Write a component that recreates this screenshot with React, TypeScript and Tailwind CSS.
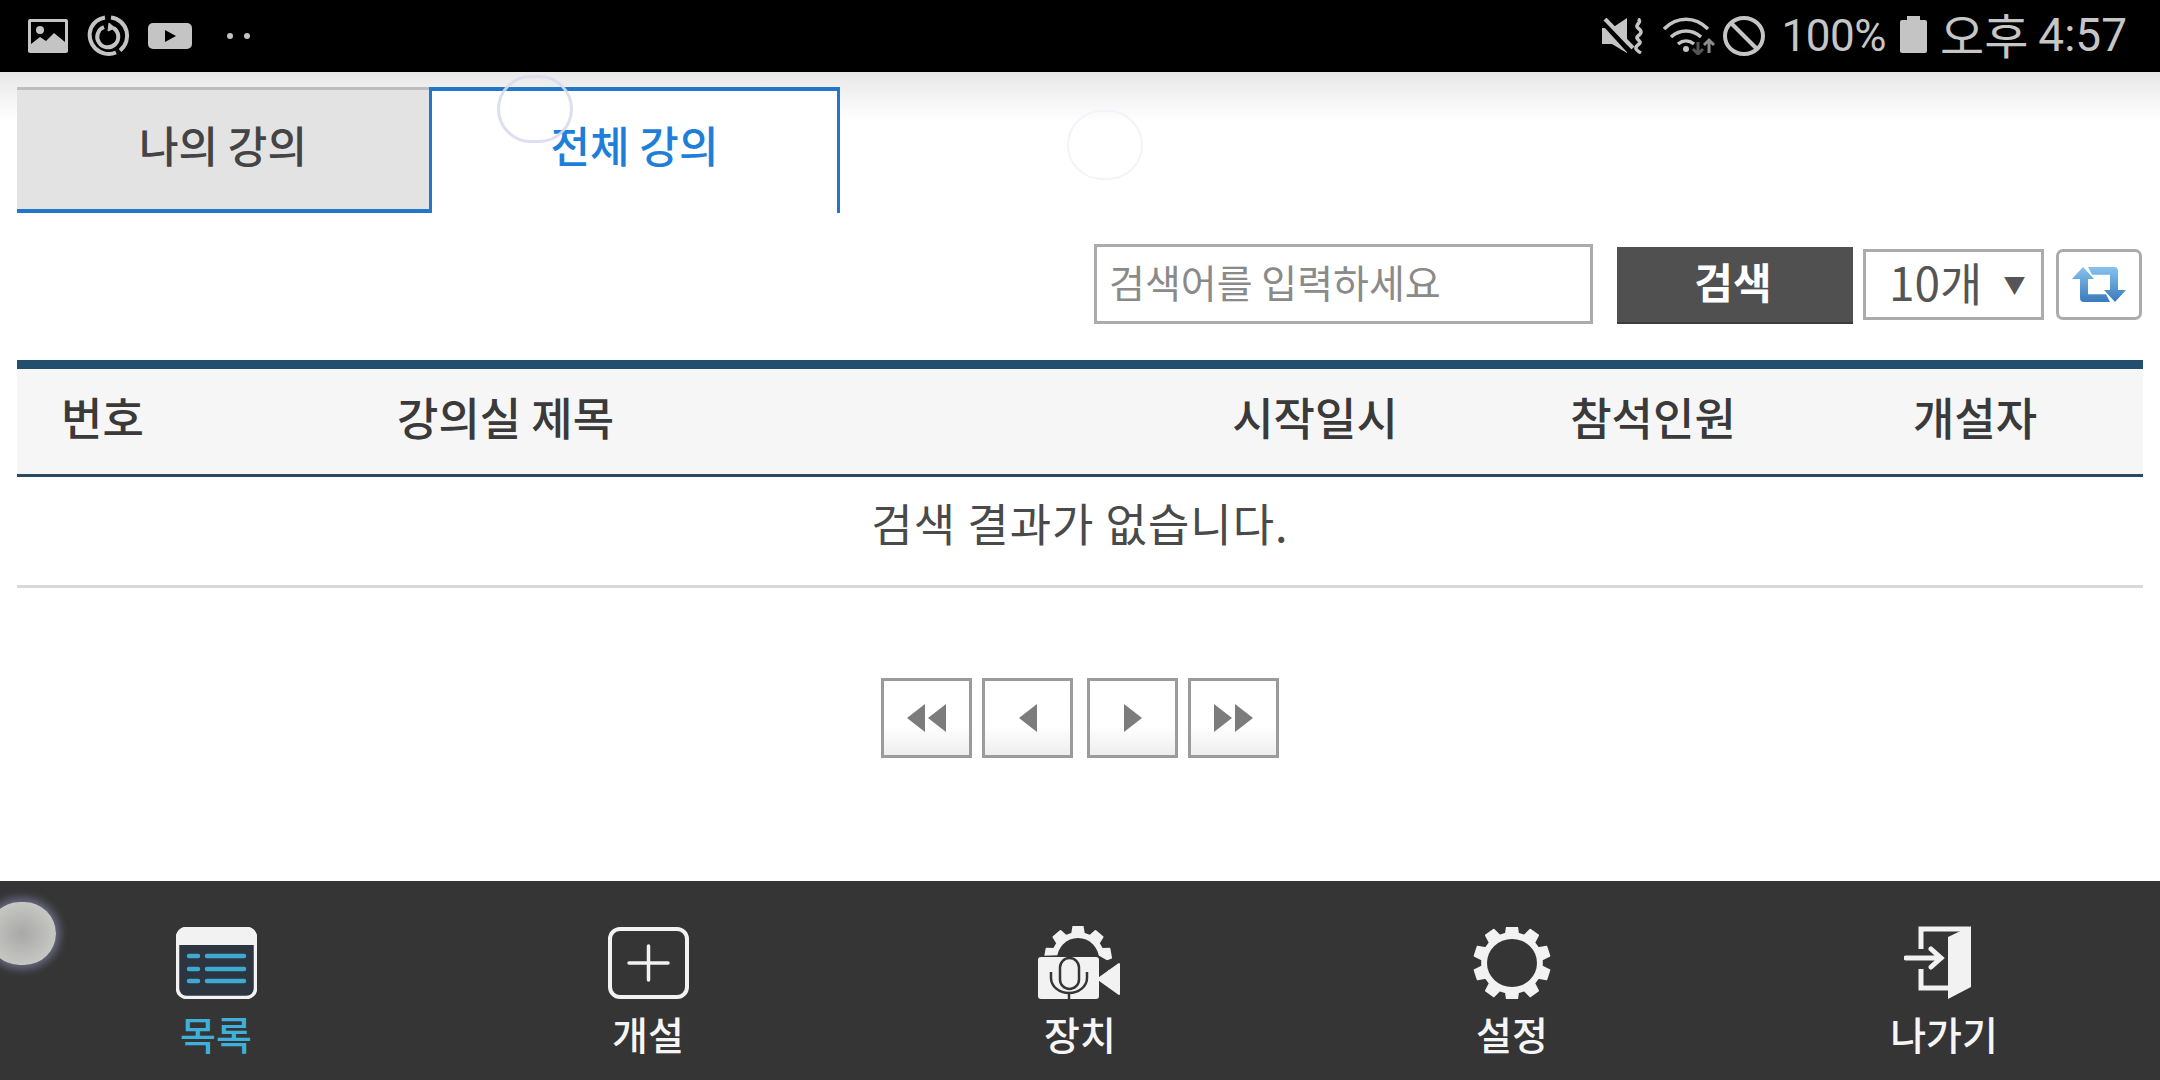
const ko = "font-['Noto_Sans_CJK_KR','Noto_Sans',sans-serif]";

function StatusLeft() {
  return (
    <div className="flex items-center">
      <svg width="40" height="34" viewBox="0 0 40 34" className="ml-[28px]">
        <rect width="40" height="34" rx="2" fill="#c4c4c4" />
        <rect x="3" y="3" width="34" height="28" fill="#000" />
        <circle cx="12" cy="11" r="4" fill="#c4c4c4" />
        <path d="M3 25l9-7 6 4 8-8 11 9v8H3z" fill="#c4c4c4" />
      </svg>
      <svg width="46" height="42" viewBox="0 0 46 42" className="ml-[18px]" fill="none" stroke="#c4c4c4">
        <path d="M25 2.500a18.500 18.500 0 0 1 9 33" strokeWidth="4" />
        <path d="M30 37.500A19 19 0 0 1 5 13a19 19 0 0 1 14-10.500" strokeWidth="4" />
        <path d="M18 12a10.500 10.500 0 1 0 9.500 1" strokeWidth="4" />
        <path d="M23 8l6 5-7 3z" fill="#c4c4c4" strokeWidth="1" />
      </svg>
      <svg width="44" height="26" viewBox="0 0 44 26" className="ml-[16px]">
        <rect width="44" height="26" rx="5" fill="#c4c4c4" />
        <path d="M17 7l11 6-11 6z" fill="#000" />
      </svg>
      <span className="ml-[35px] h-[6px] w-[6px] rounded-full bg-[#c4c4c4]" />
      <span className="ml-[11px] h-[6px] w-[6px] rounded-full bg-[#c4c4c4]" />
    </div>
  );
}

function StatusRight() {
  return (
    <div className="flex items-center pr-[33px] text-[#c6c6c6]">
      <svg width="44" height="36" viewBox="0 0 44 36" fill="#c4c4c4">
        <path d="M0 10h10L25 0v35L10 26H0z" />
        <path d="M0 3l30 33" stroke="#000" strokeWidth="5" />
        <path d="M3 1l28 29" stroke="#c4c4c4" strokeWidth="4" />
        <path d="M36 1c5 3-4 6 0 9s4 5 0 8 5 5 1 8-5 5 2 9" fill="none" stroke="#c4c4c4" strokeWidth="3.500" />
      </svg>
      <svg width="54" height="38" viewBox="0 0 54 38" className="ml-[17px]" fill="none" stroke="#c4c4c4" strokeWidth="3.500">
        <path d="M1 12c13-13 31-13 44 0" />
        <path d="M8 20c9-8 21-8 30 0" />
        <path d="M15 27c5-4 11-4 16 0" />
        <circle cx="23" cy="32" r="3" fill="#c4c4c4" stroke="none" />
        <path d="M35 25v12M30 32l5 5 5-5" stroke="#555" strokeWidth="3" />
        <path d="M46 36V23M41 28l5-5 5 5" stroke="#8c8c8c" strokeWidth="3" />
      </svg>
      <svg width="42" height="40" viewBox="0 0 42 40" className="ml-[6px]" fill="none" stroke="#c4c4c4" strokeWidth="4">
        <ellipse cx="21" cy="20" rx="19" ry="18" />
        <path d="M8 7l26 26" />
      </svg>
      <span className="ml-[17px] font-['Roboto',sans-serif] text-[44px] leading-none tracking-[-0.5px]">100%</span>
      <span className="relative ml-[14px] h-[33px] w-[27px] rounded-[2px] bg-[#c4c4c4]">
        <span className="absolute left-[7px] top-[-4px] h-[4px] w-[13px] bg-[#c4c4c4]" />
      </span>
      <span className={`ml-[13px] mb-[6px] ${ko} text-[48px] leading-[60px]`}>오후</span>
      <span className="ml-[10px] mb-[2px] font-['Roboto',sans-serif] text-[46px] leading-none">4:57</span>
    </div>
  );
}

function PagerIcon({ dir, double }: { dir: "l" | "r"; double?: boolean }) {
  const one = dir === "l" ? "M18 0v28L0 14z" : "M0 0v28l18-14z";
  return (
    <svg width="40" height="28" viewBox="0 0 40 28" fill="#7c7c7c">
      {double ? (
        <>
          <path d={one} />
          <path d={one} transform="translate(21 0)" />
        </>
      ) : (
        <path d={one} transform="translate(11 0)" />
      )}
    </svg>
  );
}

function PagerButton({ children, className }: { children: React.ReactNode; className?: string }) {
  return (
    <button className={`flex h-[80px] w-[91px] items-center justify-center border-[3px] border-[#9b9b9b] bg-[linear-gradient(#fff_60%,#eeeeee)] ${className ?? ""}`}>
      {children}
    </button>
  );
}

function ListIcon() {
  return (
    <svg width="81" height="72" viewBox="0 0 81 72">
      <rect x="1.500" y="1.500" width="78" height="69" rx="9" fill="#2d3640" stroke="#f2f2f2" strokeWidth="3.500" />
      <path d="M10 0h61a10 10 0 0 1 10 10v8H0v-8A10 10 0 0 1 10 0z" fill="#f2f2f2" />
      <g stroke="#3fa9d2" strokeWidth="4.500" strokeLinecap="round">
        <path d="M13 29h9M13 42h9M13 54h9" />
        <path d="M31 29h37M31 42h37M31 54h37" />
      </g>
    </svg>
  );
}

function PlusIcon() {
  return (
    <svg width="81" height="72" viewBox="0 0 81 72" fill="none" stroke="#f2f2f2">
      <rect x="2" y="2" width="77" height="68" rx="10" strokeWidth="4" />
      <path d="M40.500 19v34M21 36h39" strokeWidth="3.500" strokeLinecap="round" />
    </svg>
  );
}

function gearPath(cx: number, cy: number, outer: number, inner: number, teeth: number) {
  const pts: string[] = [];
  const step = (Math.PI * 2) / teeth;
  for (let i = 0; i < teeth; i++) {
    const a = i * step - Math.PI / 2;
    const w = step * 0.2;
    const v = step * 0.32;
    const list: [number, number][] = [
      [a - v, inner],
      [a - w, outer],
      [a + w, outer],
      [a + v, inner],
    ];
    for (const [ang, r] of list) {
      pts.push(`${(cx + Math.cos(ang) * r).toFixed(1)} ${(cy + Math.sin(ang) * r).toFixed(1)}`);
    }
  }
  return `M${pts.join("L")}Z`;
}

function DeviceIcon() {
  return (
    <svg width="88" height="74" viewBox="0 0 88 74" fill="#f2f2f2">
      <path d={gearPath(42, 33, 33, 26, 9)} strokeLinejoin="round" stroke="#f2f2f2" strokeWidth="2" />
      <circle cx="42" cy="33" r="21" fill="#353535" />
      <path d="M0 30l60-2 14 8-8 38H0z" fill="#353535" />
      <rect x="2" y="31" width="61" height="42" rx="3" />
      <path d="M62 53l21-15v30z" stroke="#f2f2f2" strokeWidth="2" strokeLinejoin="round" />
      <rect x="24" y="32" width="19" height="31" rx="9.500" stroke="#353535" strokeWidth="2.500" />
      <path d="M15 46v6a18 15 0 0 0 36 0v-6M33 67v7" fill="none" stroke="#353535" strokeWidth="2.500" />
    </svg>
  );
}

function GearIcon() {
  return (
    <svg width="80" height="72" viewBox="0 0 80 72">
      <path d={gearPath(40, 36, 38, 30, 10)} fill="#f2f2f2" stroke="#f2f2f2" strokeWidth="2" strokeLinejoin="round" />
      <ellipse cx="40" cy="36" rx="25" ry="24" fill="#353535" />
    </svg>
  );
}

function ExitIcon() {
  return (
    <svg width="80" height="74" viewBox="0 0 80 74" fill="none" stroke="#f2f2f2" strokeWidth="5">
      <path d="M17 23V3h48M17 43v19h30" />
      <path d="M44 11l23-11v61l-23 12z" fill="#f2f2f2" stroke="none" />
      <path d="M2 32h35M27 23l10 9-10 9" strokeLinecap="round" />
    </svg>
  );
}

const navItems = [
  { label: "목록", icon: <ListIcon />, active: true },
  { label: "개설", icon: <PlusIcon /> },
  { label: "장치", icon: <DeviceIcon /> },
  { label: "설정", icon: <GearIcon /> },
  { label: "나가기", icon: <ExitIcon /> },
];

export default function App() {
  return (
    <div className={`relative flex h-[1080px] w-[2160px] flex-col overflow-hidden bg-white ${ko}`}>
      <header className="flex h-[72px] shrink-0 items-center justify-between bg-black">
        <StatusLeft />
        <StatusRight />
      </header>

      <main className="flex flex-1 flex-col bg-[linear-gradient(#e8e8e8,#ffffff_50px)] px-[17px] pt-[15px]">
        <div className="flex h-[126px] text-[43px] font-medium">
          <div className="flex w-[412px] items-center justify-center border-t-[3px] border-b-[4px] border-t-[#bdbdbd] border-b-[#2277c8] bg-[#e3e3e3] pb-[10px] text-[#444]">
            나의 강의
          </div>
          <div className="flex w-[411px] items-center justify-center border-x-[3px] border-t-[4px] border-[#2277c8] bg-white pb-[16px] text-[#1f7fd8]">
            전체 강의
          </div>
        </div>

        <div className="mt-[31px] flex h-[80px] items-center">
          <div className="ml-[1077px] flex h-[80px] w-[499px] items-center border-[3px] border-[#ababab] bg-white pb-[6px] pl-[12px] text-[39px] text-[#8a8a8a]">
            검색어를 입력하세요
          </div>
          <button className="ml-[24px] mt-[3px] h-[77px] w-[236px] border-b-[2px] border-[#3d3d3d] bg-[#505050] pb-[8px] pr-[4px] text-[42px] font-bold text-white">
            검색
          </button>
          <div className="ml-[10px] flex h-[71px] w-[181px] items-center border-[3px] border-[#ababab] pb-[6px] pl-[23px] text-[46px] text-[#555]">
            <span>10개</span>
            <span className="ml-[21px] mt-[4px] text-[22px] text-[#555]">▼</span>
          </div>
          <button className="ml-[12px] flex h-[71px] w-[86px] items-center justify-center rounded-[7px] border-[3px] border-[#ababab]">
            <svg width="54" height="35" viewBox="0 0 54 32" preserveAspectRatio="none">
              <defs>
                <linearGradient id="rt" x1="0" y1="0" x2="0" y2="1">
                  <stop offset="0" stopColor="#86c3ee" />
                  <stop offset="1" stopColor="#3a7abb" />
                </linearGradient>
              </defs>
              <path d="M11 0l11 11h-6v14h18l4 7H12q-4 0-4-4V11H0z" fill="url(#rt)" />
              <path d="M43 32L32 21h6V7H20l-4-7h26q4 0 4 4v17h8z" fill="url(#rt)" />
            </svg>
          </button>
        </div>

        <div className="mt-[36px] border-t-[9px] border-b-[3px] border-t-[#234f6e] border-b-[#2a4a63] bg-[#f6f6f6]">
          <div className="grid h-[105px] grid-cols-[380px_748px_340px_336px_1fr] items-center pb-[10px] text-[45px] font-medium text-[#3a3a3a]">
            <div className="pl-[44px]">번호</div>
            <div>강의실 제목</div>
            <div className="text-center">시작일시</div>
            <div className="text-center">참석인원</div>
            <div className="pr-[14px] text-center">개설자</div>
          </div>
        </div>
        <div className="flex h-[111px] items-center justify-center border-b-[3px] border-[#d8d8d8] pb-[16px] text-[45px] tracking-[1px] text-[#4a4a4a]">
          검색 결과가 없습니다.
        </div>

        <div className="mt-[90px] flex justify-center gap-[10px]">
          <PagerButton>
            <PagerIcon dir="l" double />
          </PagerButton>
          <PagerButton>
            <PagerIcon dir="l" />
          </PagerButton>
          <PagerButton className="ml-[4px]">
            <PagerIcon dir="r" />
          </PagerButton>
          <PagerButton>
            <PagerIcon dir="r" double />
          </PagerButton>
        </div>
      </main>

      <nav className="grid h-[199px] shrink-0 grid-cols-5 bg-[#353535]">
        {navItems.map((item) => (
          <div key={item.label} className="flex flex-col items-center pt-[45px]">
            <div className="flex h-[74px] items-center">{item.icon}</div>
            <span className={`mt-[7px] text-[39px] font-medium leading-[52px] ${item.active ? "text-[#3fb0dc]" : "text-[#f5f5f5]"}`}>
              {item.label}
            </span>
          </div>
        ))}
      </nav>

      {/* touch pointers left on the capture */}
      <div className="absolute left-[497px] top-[75px] h-[68px] w-[76px] rounded-full border-[3px] border-[#d8dcee] opacity-90" />
      <div className="absolute left-[1067px] top-[110px] h-[70px] w-[76px] rounded-full border-[2px] border-[#f2f4fa]" />
      <div className="absolute left-[-12px] top-[902px] h-[63px] w-[68px] rounded-full bg-[radial-gradient(#a8a8a8,#c8c8c4_75%)] shadow-[0_0_8px_4px_#6a6b85]" />
    </div>
  );
}
